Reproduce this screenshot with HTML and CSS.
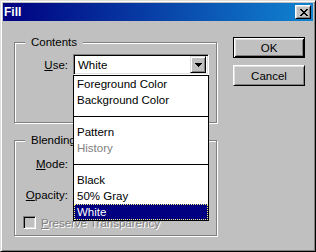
FILE: index.html
```html
<!DOCTYPE html>
<html>
<head>
<meta charset="utf-8">
<link rel="stylesheet" href="styles.css">
</head>
<body>
<div class="window">
  <div class="titlebar">
    <span class="title">Fill</span>
    <span class="close">
      <svg width="8" height="7" viewBox="0 0 8 7" shape-rendering="crispEdges">
        <path d="M0 0h2v1H0zM6 0h2v1H6zM1 1h2v1H1zM5 1h2v1H5zM2 2h4v1H2zM3 3h2v1H3zM2 4h4v1H2zM1 5h2v1H1zM5 5h2v1H5zM0 6h2v1H0zM6 6h2v1H6z" fill="#000"/>
      </svg>
    </span>
  </div>
  <div class="main">
    <div class="groups">
      <div class="group contents">
        <span class="legend">Contents</span>
        <div class="row use-row">
          <span class="lbl"><u>U</u>se:</span>
          <div class="combo">
            <span class="combo-text">White</span>
            <span class="drop-btn">
              <svg width="7" height="4" viewBox="0 0 7 4" shape-rendering="crispEdges">
                <path d="M0 0h7v1H0zM1 1h5v1H1zM2 2h3v1H2zM3 3h1v1H3z" fill="#000"/>
              </svg>
            </span>
            <ul class="droplist">
              <li>Foreground Color</li>
              <li>Background Color</li>
              <li class="sep"><span class="line"></span></li>
              <li>Pattern</li>
              <li class="disabled">History</li>
              <li class="sep"><span class="line"></span></li>
              <li>Black</li>
              <li>50% Gray</li>
              <li class="selected">White</li>
            </ul>
          </div>
        </div>
      </div>
      <div class="group blending">
        <span class="legend">Blending</span>
        <div class="row mode-row">
          <span class="lbl"><u>M</u>ode:</span>
          <div class="combo"></div>
        </div>
        <div class="row opacity-row">
          <span class="lbl"><u>O</u>pacity:</span>
          <div class="field"></div>
        </div>
        <div class="row check-row">
          <span class="checkbox"></span>
          <span class="check-label"><u>P</u>reserve Transparency</span>
        </div>
      </div>
    </div>
    <div class="buttons">
      <div class="btn default">OK</div>
      <div class="btn">Cancel</div>
    </div>
  </div>
</div>
</body>
</html>
```

FILE: styles.css
```css
html, body {
  margin: 0;
  padding: 0;
}

.window {
  width: 316px;
  height: 252px;
  box-sizing: border-box;
  background: #c0c0c0;
  border: 1px solid;
  border-color: #dfdfdf #000 #000 #dfdfdf;
  box-shadow: inset 1px 1px #fff, inset -1px -1px #808080;
  padding: 2px;
  font-family: "Liberation Sans", Arial, sans-serif;
  font-size: 11.5px;
  color: #000;
}

.titlebar {
  height: 18px;
  display: flex;
  align-items: center;
  justify-content: space-between;
  padding: 0 2px 0 1px;
  background: linear-gradient(to right, #000080, #1084d0);
}

.title {
  color: #fff;
  font-weight: bold;
  font-size: 12px;
}

.close {
  width: 16px;
  height: 14px;
  box-sizing: border-box;
  background: #c0c0c0;
  border: 1px solid;
  border-color: #fff #000 #000 #fff;
  box-shadow: inset 1px 1px #dfdfdf, inset -1px -1px #808080;
  display: flex;
  align-items: center;
  justify-content: center;
  padding-left: 1px;
}

.close svg {
  display: block;
}

.main {
  display: flex;
  padding-left: 11px;
}

.groups {
  margin-top: 21px;
  width: 203px;
}

.group {
  position: relative;
  box-sizing: border-box;
  border: 1px solid #808080;
  box-shadow: inset 1px 1px #fff, 1px 1px #fff;
}

.contents {
  height: 81px;
}

.blending {
  height: 96px;
  margin-top: 17px;
}

.legend {
  position: absolute;
  top: -8px;
  left: 10px;
  padding: 0 6px 0 6px;
  background: #c0c0c0;
  line-height: 14px;
}

.row {
  display: flex;
  align-items: center;
}

.lbl {
  width: 53px;
  text-align: right;
  margin-right: 5px;
  flex: none;
}

.use-row {
  margin-top: 11px;
}

.mode-row {
  margin-top: 12px;
}

.opacity-row {
  margin-top: 10px;
}

.check-row {
  margin-top: 11px;
  padding-left: 8px;
}

.combo {
  position: relative;
  width: 136px;
  height: 21px;
  box-sizing: border-box;
  background: #fff;
  border: 1px solid;
  border-color: #808080 #fff #fff #808080;
  box-shadow: inset 1px 1px #000, inset -1px -1px #dfdfdf;
  display: flex;
  align-items: center;
  justify-content: space-between;
  padding: 0 2px 0 4px;
}

.drop-btn {
  width: 16px;
  height: 17px;
  box-sizing: border-box;
  background: #c0c0c0;
  border: 1px solid;
  border-color: #dfdfdf #000 #000 #dfdfdf;
  box-shadow: inset 1px 1px #fff, inset -1px -1px #808080;
  display: flex;
  align-items: center;
  justify-content: center;
}

.drop-btn svg {
  display: block;
}

.droplist {
  position: absolute;
  z-index: 10;
  top: 20px;
  left: -1px;
  width: 136px;
  box-sizing: border-box;
  margin: 0;
  padding: 0;
  list-style: none;
  background: #fff;
  border: 1px solid #000;
}

.droplist li {
  height: 16px;
  line-height: 16px;
  padding-left: 3px;
  white-space: nowrap;
  box-sizing: border-box;
}

.droplist li.sep {
  padding: 8px 0 0 0;
}

.droplist .line {
  display: block;
  height: 1px;
  background: #000;
}

.droplist li.disabled {
  color: #808080;
}

.droplist li.selected {
  background: #000080;
  color: #fff;
  outline: 1px dotted #ffff7f;
  outline-offset: -1px;
}

.field {
  width: 40px;
  height: 21px;
  box-sizing: border-box;
  background: #fff;
  border: 1px solid;
  border-color: #808080 #fff #fff #808080;
  box-shadow: inset 1px 1px #000, inset -1px -1px #dfdfdf;
}

.checkbox {
  width: 13px;
  height: 13px;
  box-sizing: border-box;
  border: 1px solid;
  border-color: #808080 #fff #fff #808080;
  box-shadow: inset 1px 1px #000, inset -1px -1px #dfdfdf;
  background: #c0c0c0;
  flex: none;
}

.check-label {
  margin-left: 5px;
  color: #808080;
  text-shadow: 1px 1px #fff;
}

.buttons {
  margin-left: 16px;
  margin-top: 16px;
  display: flex;
  flex-direction: column;
  gap: 7px;
}

.btn {
  width: 72px;
  height: 21px;
  box-sizing: border-box;
  background: #c0c0c0;
  border: 1px solid;
  border-color: #fff #000 #000 #fff;
  box-shadow: inset 1px 1px #dfdfdf, inset -1px -1px #808080;
  display: flex;
  align-items: center;
  justify-content: center;
}

.btn.default {
  border-color: #000;
  box-shadow: inset 1px 1px #fff, inset -1px -1px #000, inset 2px 2px #dfdfdf, inset -2px -2px #808080;
}
```
